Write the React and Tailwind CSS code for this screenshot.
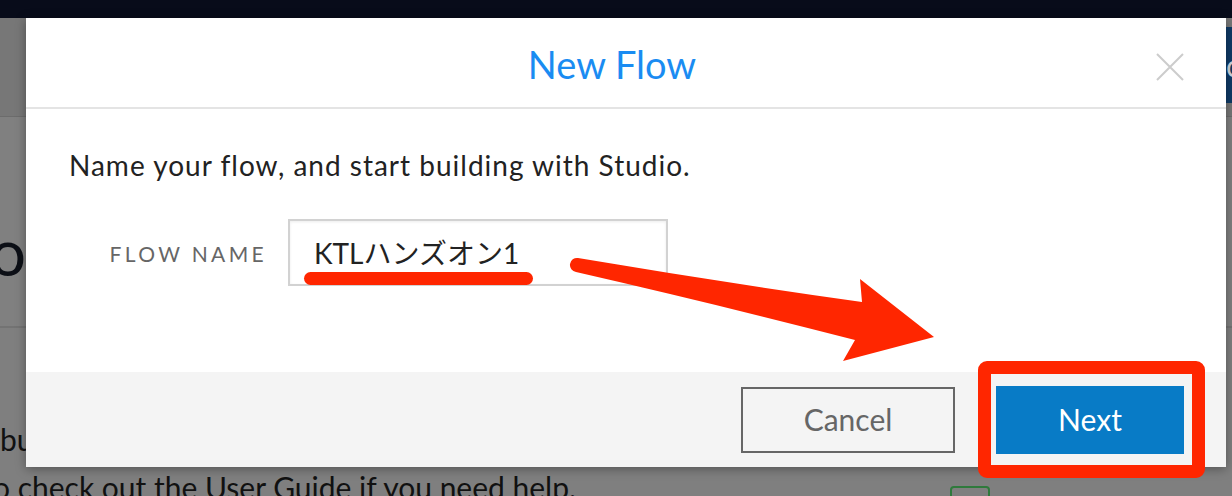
import React from "react";

const font = { fontFamily: "Lato, 'Noto Sans CJK JP', sans-serif" };

export default function App() {
  return (
    <div className="relative w-[1232px] h-[496px] overflow-hidden bg-[#7f7f7f]" style={font}>
      {/* background page (dimmed) */}
      <div className="h-[18px] bg-[#080c1a]" />
      <div className="h-[99px] bg-[#777777] border-b border-[#6c6c6c] flex justify-end pt-[9px]">
        <div className="w-[8px] h-[76px] bg-[#0f3a66] text-[#cfd6df] text-[30px] leading-[76px] overflow-hidden pl-[2px]">c</div>
      </div>
      <div className="h-[211px] bg-[#808080] border-b-2 border-[#737373] flex items-center pt-[60px]">
        <div className="w-[26px] overflow-hidden flex justify-end">
          <span className="text-[64px] text-[#0c0f16] whitespace-nowrap leading-none">Stoo</span>
        </div>
      </div>
      <div className="pt-[96px] text-[30px] text-[#111] whitespace-nowrap leading-none">building your first flow</div>
      <div className="text-[30px] text-[#111] whitespace-nowrap leading-none mt-[18px] ml-[-7px]">o check out the User Guide if you need help.</div>

      {/* modal */}
      <div className="absolute left-[26px] top-[18px] w-[1200px] h-[449px] bg-white shadow-[0_2px_10px_rgba(0,0,0,0.35)] flex flex-col">
        <div className="h-[91px] border-b-2 border-[#e4e4e4] flex items-center justify-center relative pr-[28px]">
          <div className="text-[38px] text-[#1a8cf2] mt-[3px]">New Flow</div>
          <svg className="absolute right-[42px] top-[35px]" width="28" height="28" viewBox="0 0 28 28">
            <path d="M1 1 L27 27 M27 1 L1 27" stroke="#cccccc" strokeWidth="2" />
          </svg>
        </div>
        <div className="flex-1 pl-[43px] pt-[40px]">
          <div className="text-[28px] tracking-[1px] text-[#222] leading-[32px]">Name your flow, and start building with Studio.</div>
          <div className="flex items-center mt-[38px]">
            <div className="w-[219px] flex justify-end pr-[21px] text-[21px] tracking-[0.16em] text-[#666] pt-[2px]">FLOW NAME</div>
            <div className="w-[380px] h-[67px] border-2 border-[#d2d2d2] shadow-[inset_0_1px_3px_rgba(0,0,0,0.08)] flex items-center pl-[24px] text-[28px] text-[#222]">
              KTLハンズオン1
            </div>
          </div>
        </div>
        <div className="h-[95px] bg-[#f4f4f4] flex items-center justify-end gap-[41px] pr-[42px]">
          <button className="w-[214px] h-[66px] border-2 border-[#666] text-[30px] text-[#666] bg-[#f4f4f4]">Cancel</button>
          <button className="w-[188px] h-[68px] bg-[#087bc6] text-[30px] text-white">Next</button>
        </div>
      </div>

      {/* annotations */}
      <div className="absolute left-[978px] top-[361px] w-[227px] h-[117px] border-[13px] border-[#ff2600] rounded-[9px]" />
      <svg className="absolute left-0 top-0" width="1232" height="496" viewBox="0 0 1232 496">
        <rect x="304" y="272" width="229" height="13" rx="6.5" fill="#ff2600" />
        <path
          d="M578 258 Q720 282 862 302 L860 279 L934 337 L843 361 L855 340 Q720 305 576 272 A7 7 0 0 1 578 258 Z"
          fill="#ff2600"
        />
      </svg>
      <div className="absolute left-[950px] top-[486px] w-[40px] h-[20px] border-2 border-[#2f7a3c] rounded-[4px]" />
    </div>
  );
}
